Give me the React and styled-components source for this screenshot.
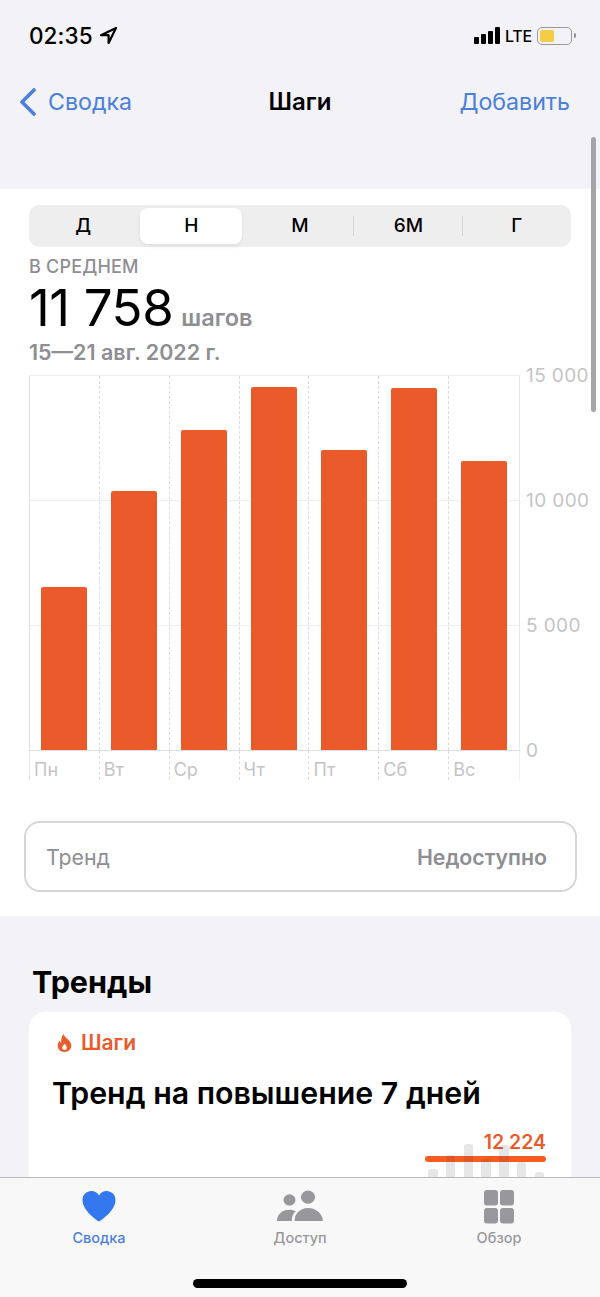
import React from "react";
import styled, { createGlobalStyle } from "styled-components";

const GlobalStyle = createGlobalStyle`
  html, body { margin: 0; padding: 0; background: #f2f2f7; }
  * { box-sizing: border-box; }
`;

const BLUE = "#4a7fdc";
const ORANGE = "#eb5a2b";
const FONT = `"Inter", "Noto Sans", sans-serif`;

const Screen = styled.div`
  position: relative;
  width: 600px;
  height: 1297px;
  overflow: hidden;
  background: #f2f2f7;
  font-family: ${FONT};
  color: #000;
`;

const StatusBar = styled.div`
  height: 71px;
  margin-bottom: 1px;
  padding: 0 25px 0 29px;
  display: flex;
  align-items: center;
  justify-content: space-between;
`;

const Time = styled.div`
  display: flex;
  align-items: center;
  gap: 6px;
  font-size: 22.5px;
  font-weight: 500;
  letter-spacing: 0.1px;
`;

const StatusIcons = styled.div`
  display: flex;
  align-items: center;
  gap: 5px;
`;

const Signal = styled.div`
  display: flex;
  align-items: flex-end;
  gap: 2px;
  height: 17px;
`;

const SignalBar = styled.span`
  width: 5px;
  height: ${(p) => p.$h}px;
  background: #000;
  border-radius: 1px;
`;

const Lte = styled.span`
  font-size: 16px;
  font-weight: 500;
  letter-spacing: -0.2px;
`;

const Battery = styled.div`
  position: relative;
  width: 35px;
  height: 18px;
  padding: 2px;
  border: 1.5px solid #9a9a9c;
  border-radius: 5px;
  margin-right: 3px;
  &::after {
    content: "";
    position: absolute;
    right: -4.5px;
    top: 5px;
    width: 2px;
    height: 5px;
    border-radius: 0 2px 2px 0;
    background: #8e8e90;
  }
`;

const BatteryLevel = styled.div`
  width: 14px;
  height: 100%;
  background: #f5cd45;
  border-radius: 2px;
`;

const NavBar = styled.div`
  height: 117px;
  padding: 0 30px 57px 19px;
  position: relative;
  display: flex;
  align-items: center;
  justify-content: space-between;
  font-size: 23.2px;
  color: ${BLUE};
`;

const NavBack = styled.div`
  display: flex;
  align-items: center;
  gap: 12px;
`;

const NavTitle = styled.div`
  position: absolute;
  left: 0;
  right: 0;
  top: 15px;
  line-height: 30px;
  text-align: center;
  font-size: 24px;
  color: #000;
  font-weight: 600;
`;

const Panel = styled.section`
  height: 727px;
  background: #fff;
  padding: 16px 29px 0;
`;

const Segments = styled.div`
  height: 42px;
  background: #eeeeef;
  border-radius: 10px;
  display: grid;
  grid-template-columns: repeat(5, 1fr);
  align-items: center;
`;

const Segment = styled.div`
  position: relative;
  height: 36px;
  line-height: 36px;
  text-align: center;
  font-size: 19px;
  font-weight: 500;
  margin: ${(p) => (p.$active ? "0 3.5px 0 3px" : 0)};
  background: ${(p) => (p.$active ? "#fff" : "transparent")};
  border-radius: 8px;
  box-shadow: ${(p) => (p.$active ? "0 2px 5px rgba(0,0,0,.07)" : "none")};
  &::after {
    content: "";
    display: ${(p) => (p.$divider ? "block" : "none")};
    position: absolute;
    right: 0;
    top: 8px;
    width: 1px;
    height: 20px;
    background: #d6d6d8;
  }
`;

const StatLabel = styled.div`
  margin-top: 9px;
  font-size: 18px;
  line-height: 22px;
  font-weight: 500;
  letter-spacing: 0.2px;
  color: #8e8e93;
`;

const StatRow = styled.div`
  display: flex;
  align-items: baseline;
  gap: 8px;
  height: 59px;
  line-height: 59px;
`;

const StatValue = styled.span`
  font-size: 51px;
  font-weight: 400;
  letter-spacing: -0.4px;
`;

const StatUnit = styled.span`
  font-size: 23.5px;
  font-weight: 600;
  color: #8e8e93;
`;

const StatDate = styled.div`
  margin-top: 1px;
  font-size: 21.5px;
  line-height: 28px;
  font-weight: 600;
  color: #8e8e93;
`;

const Chart = styled.div`
  margin-top: 9px;
  display: flex;
  height: 405px;
`;

const ChartBody = styled.div`
  width: 491px;
  flex: none;
`;

const Plot = styled.div`
  height: 376px;
  display: grid;
  grid-template-columns: repeat(7, 1fr);
  border-top: 1px solid #eeeeef;
  border-bottom: 1px solid #dedee0;
  border-left: 1px solid #dedee0;
  border-right: 1px solid #e8e8ea;
  background: repeating-linear-gradient(
    to bottom,
    transparent 0,
    transparent 124px,
    #eeeeef 124px,
    #eeeeef 125px
  );
`;

const DayColumn = styled.div`
  display: flex;
  align-items: flex-end;
  justify-content: center;
  border-right: ${(p) => (p.$last ? "none" : "1px dashed #dcdce0")};
`;

const Bar = styled.div`
  width: 46px;
  background: ${ORANGE};
  border-radius: 2px 2px 0 0;
`;

const DayLabels = styled.div`
  height: 29px;
  display: grid;
  grid-template-columns: repeat(7, 1fr);
  border-left: 1px solid #e6e6e8;
  border-right: 1px solid #eeeeef;
`;

const DayLabel = styled.div`
  padding: 8px 0 0 4px;
  font-size: 18px;
  line-height: 21px;
  color: #c4c4c6;
  border-right: ${(p) => (p.$last ? "none" : "1px dashed #dcdce0")};
`;

const Axis = styled.div`
  margin-left: 6px;
  display: flex;
  flex-direction: column;
  justify-content: space-between;
  margin-top: -10px;
  height: 397px;
`;

const AxisLabel = styled.div`
  font-size: 19px;
  line-height: 22px;
  letter-spacing: 0.4px;
  color: #c4c4c6;
  white-space: nowrap;
`;

const TrendBox = styled.div`
  margin: 41px -6px 0 -5px;
  height: 71px;
  padding: 0 28px 0 20px;
  display: flex;
  align-items: center;
  justify-content: space-between;
  border: 2px solid #d6d6d8;
  border-radius: 16px;
  font-size: 21.3px;
  color: #8e8e93;
`;

const TrendValue = styled.span`
  font-weight: 600;
`;

const TrendsSection = styled.section`
  padding: 45px 29px 0;
`;

const Heading = styled.h2`
  margin: 0 0 9px 3px;
  font-size: 30.5px;
  line-height: 42px;
  font-weight: 700;
`;

const TrendCard = styled.div`
  background: #fff;
  border-radius: 16px 16px 0 0;
  height: 200px;
  padding: 19px 25px 0 23px;
`;

const CardTag = styled.div`
  display: flex;
  align-items: center;
  gap: 9px;
  margin-left: 5px;
  font-size: 21px;
  line-height: 24px;
  font-weight: 600;
  color: ${ORANGE};
`;

const CardTitle = styled.div`
  margin-top: 20px;
  font-size: 30.3px;
  line-height: 36px;
  font-weight: 600;
`;

const MiniChart = styled.div`
  position: relative;
  width: 121px;
  height: 60px;
  margin: 19px 0 0 auto;
`;

const MiniValue = styled.div`
  text-align: right;
  font-size: 19.5px;
  line-height: 24px;
  font-weight: 600;
  color: ${ORANGE};
`;

const MiniLine = styled.div`
  position: absolute;
  left: 0;
  right: 0;
  top: 26px;
  height: 6px;
  border-radius: 3px;
  background: #f55c22;
`;

const MiniBars = styled.div`
  position: absolute;
  left: 3px;
  right: 2px;
  top: 11px;
  height: 45px;
  display: flex;
  justify-content: space-between;
  align-items: flex-end;
`;

const MiniBar = styled.span`
  width: 9.5px;
  height: ${(p) => p.$h}px;
  border-radius: 3px 3px 0 0;
  background: rgba(60, 60, 70, 0.13);
`;

const ScrollThumb = styled.div`
  position: absolute;
  left: 591px;
  top: 137px;
  width: 5px;
  height: 275px;
  border-radius: 3px;
  background: #a5a5a8;
`;

const TabBar = styled.nav`
  position: absolute;
  left: 0;
  right: 0;
  bottom: 0;
  height: 120px;
  padding-top: 12px;
  display: grid;
  grid-template-columns: 198px 204px 194px;
  background: #f8f8f9;
  border-top: 1px solid #b8b8ba;
`;

const TabItem = styled.div`
  display: flex;
  flex-direction: column;
  align-items: center;
  font-size: 14.5px;
  line-height: 20px;
  font-weight: 500;
  color: ${(p) => (p.$active ? BLUE : "#98989c")};
`;

const TabIcon = styled.div`
  height: 34px;
  margin-bottom: 4px;
  display: flex;
  align-items: flex-start;
`;

const HomeIndicator = styled.div`
  position: absolute;
  left: 193px;
  bottom: 9px;
  width: 214px;
  height: 9px;
  border-radius: 5px;
  background: #000;
`;

const segments = ["Д", "Н", "М", "6М", "Г"];
const days = [
  { name: "Пн", height: 163 },
  { name: "Вт", height: 259 },
  { name: "Ср", height: 320 },
  { name: "Чт", height: 363 },
  { name: "Пт", height: 300 },
  { name: "Сб", height: 362 },
  { name: "Вс", height: 289 },
];
const axis = ["15 000", "10 000", "5 000", "0"];
const miniBars = [17, 31, 42, 27, 41, 24, 14];

const LocationArrow = () => (
  <svg width="19" height="19" viewBox="0 0 19 19">
    <path d="M17 2 2 9.2h7.6V17z" fill="none" stroke="#000" strokeWidth="2.2" strokeLinejoin="round" />
  </svg>
);

const Chevron = () => (
  <svg width="17" height="28" viewBox="0 0 17 28">
    <path d="M15 2 3 14l12 12" fill="none" stroke={BLUE} strokeWidth="3.6" strokeLinecap="round" strokeLinejoin="round" />
  </svg>
);

const Flame = () => (
  <svg width="15" height="18" viewBox="0 0 15 18">
    <path
      fillRule="evenodd"
      fill={ORANGE}
      d="M6.500 0c.8 2.600 2.600 3.600 4.500 5.600 1.800 1.800 3.300 3.700 3.300 6.200 0 3.600-2.900 6.200-6.800 6.200S.7 15.400.7 11.800c0-2.100.9-3.800 2.200-5 .2 1 .6 1.700 1.300 2.200C4 5.800 4.600 2.400 6.500 0zM7.600 9.500c-.4 1.400-2.400 2.200-2.400 4.200 0 1.300 1 2.300 2.300 2.300s2.300-1 2.300-2.300c0-1.900-1.500-2.900-2.200-4.200z"
    />
  </svg>
);

const Heart = () => (
  <svg width="34" height="32" viewBox="0 0 34 34" preserveAspectRatio="none">
    <path
      fill="#3478f0"
      d="M17 33.500C15.800 32.500 0.500 22.500 0.500 10.500 0.500 4.800 4.600 1 9.400 1c3.400 0 6 1.800 7.600 4.800C18.600 2.800 21.200 1 24.600 1c4.800 0 8.900 3.800 8.900 9.500C33.500 22.500 18.200 32.500 17 33.500z"
    />
  </svg>
);

const People = () => (
  <svg width="46" height="32" viewBox="0 0 46 34" preserveAspectRatio="none" fill="#98989c">
    <circle cx="12.500" cy="10.500" r="6" />
    <circle cx="31" cy="7.500" r="7" />
    <path d="M0 33c0-7 5-12 12.500-12 2.500 0 4.600.6 6.300 1.600-2.500 2.300-4 5.800-4 9.400l.1 1z" />
    <path d="M17.600 33c-.3-7 5-14 13.400-14s14.800 7 14.800 13c0 .6-.3 1-1 1z" />
  </svg>
);

const Grid = () => (
  <svg width="30" height="34" viewBox="0 0 30 34" fill="#98989c">
    <rect x="0" y="0" width="14" height="15.500" rx="3" />
    <rect x="16" y="0" width="14" height="15.500" rx="3" />
    <rect x="0" y="18" width="14" height="15.500" rx="3" />
    <rect x="16" y="18" width="14" height="15.500" rx="3" />
  </svg>
);

export default function App() {
  return (
    <Screen>
      <GlobalStyle />
      <StatusBar>
        <Time>
          02:35 <LocationArrow />
        </Time>
        <StatusIcons>
          <Signal>
            <SignalBar $h={7} />
            <SignalBar $h={10} />
            <SignalBar $h={13} />
            <SignalBar $h={17} />
          </Signal>
          <Lte>LTE</Lte>
          <Battery>
            <BatteryLevel />
          </Battery>
        </StatusIcons>
      </StatusBar>

      <NavBar>
        <NavBack>
          <Chevron />
          Сводка
        </NavBack>
        <NavTitle>Шаги</NavTitle>
        <span>Добавить</span>
      </NavBar>

      <Panel>
        <Segments>
          {segments.map((s, i) => (
            <Segment key={s} $active={i === 1} $divider={i === 2 || i === 3}>
              {s}
            </Segment>
          ))}
        </Segments>
        <StatLabel>В СРЕДНЕМ</StatLabel>
        <StatRow>
          <StatValue>11 758</StatValue>
          <StatUnit>шагов</StatUnit>
        </StatRow>
        <StatDate>15—21 авг. 2022 г.</StatDate>
        <Chart>
          <ChartBody>
            <Plot>
              {days.map((d, i) => (
                <DayColumn key={d.name} $last={i === days.length - 1}>
                  <Bar style={{ height: d.height }} />
                </DayColumn>
              ))}
            </Plot>
            <DayLabels>
              {days.map((d, i) => (
                <DayLabel key={d.name} $last={i === days.length - 1}>
                  {d.name}
                </DayLabel>
              ))}
            </DayLabels>
          </ChartBody>
          <Axis>
            {axis.map((a) => (
              <AxisLabel key={a}>{a}</AxisLabel>
            ))}
          </Axis>
        </Chart>
        <TrendBox>
          <span>Тренд</span>
          <TrendValue>Недоступно</TrendValue>
        </TrendBox>
      </Panel>

      <TrendsSection>
        <Heading>Тренды</Heading>
        <TrendCard>
          <CardTag>
            <Flame />
            Шаги
          </CardTag>
          <CardTitle>Тренд на повышение 7 дней</CardTitle>
          <MiniChart>
            <MiniValue>12 224</MiniValue>
            <MiniLine />
            <MiniBars>
              {miniBars.map((h, i) => (
                <MiniBar key={i} $h={h} />
              ))}
            </MiniBars>
          </MiniChart>
        </TrendCard>
      </TrendsSection>

      <ScrollThumb />

      <TabBar>
        <TabItem $active>
          <TabIcon>
            <Heart />
          </TabIcon>
          Сводка
        </TabItem>
        <TabItem>
          <TabIcon>
            <People />
          </TabIcon>
          Доступ
        </TabItem>
        <TabItem>
          <TabIcon>
            <Grid />
          </TabIcon>
          Обзор
        </TabItem>
      </TabBar>
      <HomeIndicator />
    </Screen>
  );
}
